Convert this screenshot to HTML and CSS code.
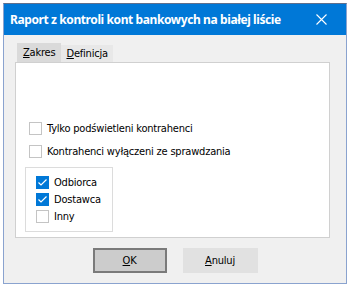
FILE: index.html
```html
<!DOCTYPE html>
<html>
<head>
<meta charset="utf-8">
<link rel="stylesheet" href="styles.css">
</head>
<body>
<div class="window">
  <div class="titlebar">
    <span class="title">Raport z kontroli kont bankowych na białej liście</span>
    <svg class="close" width="11" height="11" viewBox="0 0 11 11"><path d="M0.5 0.5 L10.5 10.5 M10.5 0.5 L0.5 10.5" stroke="#fff" stroke-width="1.1" fill="none"/></svg>
  </div>
  <div class="content">
    <div class="tabs">
      <div class="tab active"><u>Z</u>akres</div>
      <div class="tab"><u>D</u>efinicja</div>
    </div>
    <div class="panel">
      <label class="check"><span class="box"></span>Tylko podświetleni kontrahenci</label>
      <label class="check"><span class="box"></span>Kontrahenci wyłączeni ze sprawdzania</label>
      <div class="group">
        <label class="check small"><span class="box on"><svg width="13" height="13" viewBox="0 0 13 13"><path d="M2.5 6.5 L5 9 L10.5 3.5" stroke="#fff" stroke-width="1.2" fill="none"/></svg></span>Odbiorca</label>
        <label class="check small"><span class="box on"><svg width="13" height="13" viewBox="0 0 13 13"><path d="M2.5 6.5 L5 9 L10.5 3.5" stroke="#fff" stroke-width="1.2" fill="none"/></svg></span>Dostawca</label>
        <label class="check small"><span class="box"></span>Inny</label>
      </div>
    </div>
    <div class="buttons">
      <div class="btn default"><u>O</u>K</div>
      <div class="btn"><u>A</u>nuluj</div>
    </div>
  </div>
</div>
</body>
</html>
```

FILE: styles.css
```css
html, body {
  margin: 0;
  padding: 0;
  background: #ffffff;
}
body {
  font-family: "DejaVu Sans Condensed", "DejaVu Sans", sans-serif;
  font-stretch: condensed;
  font-size: 11px;
  letter-spacing: -0.2px;
  color: #000;
}
.window {
  margin: 3px 0 0 3px;
  width: 342px;
  height: 279px;
  border: 1px solid #8aa3cf;
  border-top-color: #5f6f8c;
  background: #f0f0f0;
  display: flex;
  flex-direction: column;
}
.titlebar {
  height: 31px;
  background: #0078d7;
  display: flex;
  align-items: center;
  justify-content: space-between;
  padding: 0 19px 0 6px;
  flex: none;
}
.title {
  color: #fff;
  font-family: "Noto Sans", "Open Sans", sans-serif;
  font-stretch: normal;
  font-weight: bold;
  font-size: 12px;
  letter-spacing: -0.4px;
  white-space: nowrap;
}
.close {
  display: block;
}
.content {
  padding: 8px 16px 0 11px;
  display: flex;
  flex-direction: column;
}
.tabs {
  display: flex;
  align-items: flex-end;
  padding-left: 2px;
  height: 19px;
}
.tab {
  height: 17px;
  line-height: 17px;
  padding: 0 5px;
  background: #e8e8e8;
}
.tab.active {
  height: 19px;
  line-height: 19px;
  background: #dadada;
  padding: 0 6px;
}
.panel {
  background: #fff;
  border: 1px solid #d0d0d0;
  padding: 59px 0 0 13px;
  display: flex;
  flex-direction: column;
  align-items: flex-start;
  box-sizing: border-box;
  width: 315px;
  height: 176px;
}
.check {
  display: flex;
  align-items: center;
  height: 13px;
  margin-bottom: 10px;
  white-space: nowrap;
}
.box {
  width: 13px;
  height: 13px;
  box-sizing: border-box;
  border: 1px solid #c4c4c4;
  background: #fff;
  margin-right: 5px;
  flex: none;
  position: relative;
}
.box.on {
  background: #0078d7;
  border-color: #0078d7;
}
.box svg {
  position: absolute;
  left: -1px;
  top: -1px;
}
.group {
  margin: -1px 0 0 -4px;
  width: 88px;
  height: 65px;
  box-sizing: border-box;
  border: 1px solid #dcdcdc;
  padding: 8px 0 0 10px;
}
.check.small {
  margin-bottom: 4px;
}
.buttons {
  display: flex;
  justify-content: center;
  gap: 16px;
  margin-top: 10px;
  padding-left: 5px;
}
.btn {
  width: 75px;
  height: 25px;
  box-sizing: border-box;
  background: #e1e1e1;
  display: flex;
  align-items: center;
  justify-content: center;
}
.btn.default {
  width: 74px;
  background: #cccccc;
  border: 2px solid #7a7a7a;
}
```
